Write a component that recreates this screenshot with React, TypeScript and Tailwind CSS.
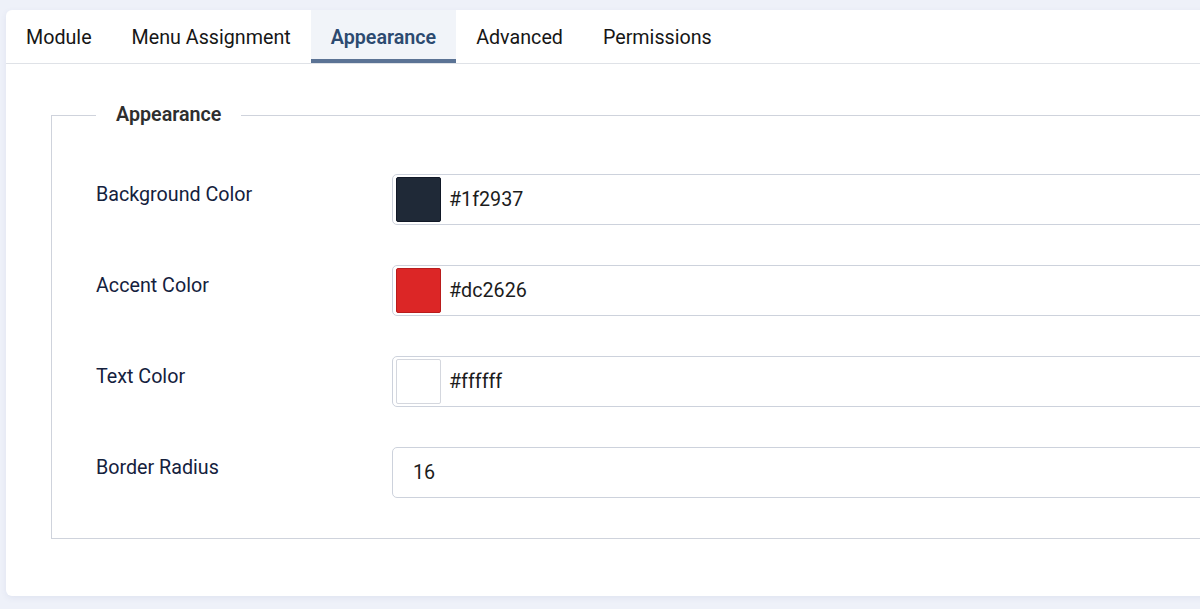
const tabs = ["Module", "Menu Assignment", "Appearance", "Advanced", "Permissions"];

const rows = [
  { label: "Background Color", value: "#1f2937", swatch: "bg-[#1f2937] border-[#111827]" },
  { label: "Accent Color", value: "#dc2626", swatch: "bg-[#dc2626] border-[#b91c1c]" },
  { label: "Text Color", value: "#ffffff", swatch: "bg-white border-[#d4d7de]" },
  { label: "Border Radius", value: "16", swatch: "" },
];

export default function App() {
  return (
    <div className="min-h-[609px] w-[1200px] overflow-hidden bg-[#eef1f9] pt-[10px] pl-[6px] font-['Roboto',sans-serif]">
      <div className="w-[1220px] rounded-l-[6px] bg-white pb-[57px] shadow-[0_2px_6px_rgba(60,80,140,0.08)]">
        <nav className="flex h-[54px] border-b border-[#dfe2e7]">
          {tabs.map((t) => {
            const active = t === "Appearance";
            return (
              <div
                key={t}
                className={
                  active
                    ? "flex items-center border-b-[4px] border-[#5b7395] bg-[#f1f4f9] px-5 pt-[6px] text-[19.7px] font-semibold text-[#2c4a70]"
                    : "flex items-center px-5 pt-[2px] text-[19.7px] text-[#161616]"
                }
              >
                {t}
              </div>
            );
          })}
        </nav>

        <div className="pl-[45px] pt-[37px]">
          <fieldset className="border border-r-0 border-[#cfd3dc] pl-[44px] pb-[40px]">
            <legend className="px-5 text-[19.7px] leading-[28px] font-semibold text-[#2e2e2e]">Appearance</legend>
            <div className="flex flex-col gap-[40px] pt-[45px]">
              {rows.map((r) => (
                <div key={r.label} className="flex">
                  <label className="w-[296px] pt-[7px] text-[19.7px] leading-[28px] text-[#14213d]">{r.label}</label>
                  <div className="flex h-[51px] flex-1 items-center rounded-[5px] border border-[#cdd2dc] bg-white pl-[3px]">
                    {r.swatch ? (
                      <>
                        <span className={"h-[45px] w-[45px] rounded-[2px] border " + r.swatch} />
                        <span className="pl-[8px] text-[19.7px] text-[#1c1c1c]">{r.value}</span>
                      </>
                    ) : (
                      <span className="pl-[17px] text-[19.7px] text-[#1c1c1c]">{r.value}</span>
                    )}
                  </div>
                </div>
              ))}
            </div>
          </fieldset>
        </div>
      </div>
    </div>
  );
}
